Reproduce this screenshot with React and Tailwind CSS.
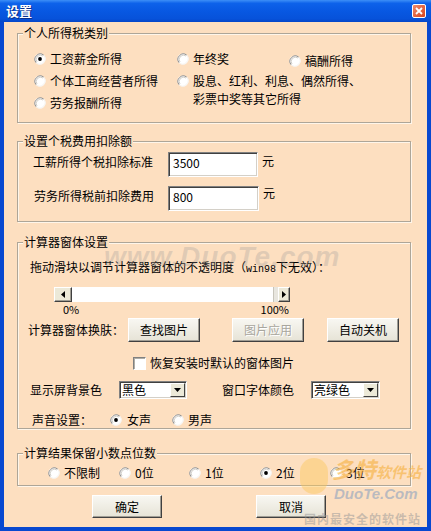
import React from "react";

function Radio({ checked }) {
  return (
    <svg width="12" height="12" viewBox="0 0 12 12" className="shrink-0">
      <circle cx="6" cy="6" r="5.6" fill="#ffffff" />
      <path d="M2.2 9.8 A5.4 5.4 0 0 1 9.8 2.2" stroke="#8c8c8c" strokeWidth="1" fill="none" />
      <path d="M3 9 A4.3 4.3 0 0 1 9 3" stroke="#d2d0ca" strokeWidth="1" fill="none" />
      <path d="M9.8 2.2 A5.4 5.4 0 0 1 2.2 9.8" stroke="#f4f2ee" strokeWidth="1" fill="none" />
      {checked && <circle cx="6" cy="6" r="1.9" fill="#000000" />}
    </svg>
  );
}

function RadioItem({ checked, children, className }) {
  return (
    <div className={"flex items-center gap-[4px] whitespace-nowrap " + (className || "")}>
      <Radio checked={checked} />
      <span>{children}</span>
    </div>
  );
}

function Group({ label, className, children }) {
  return (
    <div className={"relative border border-[#aea698] shadow-[inset_1px_1px_0_#fff6ea,1px_1px_0_#fff6ea] " + className}>
      <span className="absolute left-[5px] top-[-8px] px-[1px] bg-[#fddfc0] leading-[14px] whitespace-nowrap">
        {label}
      </span>
      {children}
    </div>
  );
}

function Button({ children, className, disabled }) {
  return (
    <div
      className={
        "flex items-center justify-center bg-[linear-gradient(to_bottom,#f8f7f2,#e6e3d6)] border border-t-[#ffffff] border-l-[#ffffff] border-b-[#404040] border-r-[#404040] shadow-[inset_-1px_-1px_0_#a09d94] " +
        (disabled ? "text-[#a8a69e] [text-shadow:1px_1px_0_#ffffff] " : "text-black ") +
        className
      }
    >
      {children}
    </div>
  );
}

function Input({ value, className }) {
  return (
    <div
      className={
        "bg-white border border-t-[#808080] border-l-[#808080] border-b-[#ffffff] border-r-[#ffffff] shadow-[inset_1px_1px_0_#404040,inset_-1px_-1px_0_#d4d0c8] pl-[4px] pt-[3px] leading-[14px] " +
        className
      }
    >
      {value}
    </div>
  );
}

function Select({ value, className }) {
  return (
    <div
      className={
        "bg-white border border-t-[#808080] border-l-[#808080] border-b-[#ffffff] border-r-[#ffffff] shadow-[inset_1px_1px_0_#404040,inset_-1px_-1px_0_#d4d0c8] flex items-stretch " +
        className
      }
    >
      <span className="flex-1 pl-[2px] pt-[1px] leading-[14px]">{value}</span>
      <div className="w-[15px] my-[1px] mr-[1px] bg-[#ece9d8] border border-t-[#ffffff] border-l-[#ffffff] border-b-[#404040] border-r-[#404040] flex items-center justify-center">
        <svg width="7" height="4" viewBox="0 0 7 4">
          <path d="M0 0H7L3.5 4Z" fill="#000" />
        </svg>
      </div>
    </div>
  );
}

function ScrollBtn({ dir, className }) {
  return (
    <div
      className={
        "bg-[#ece9d8] border border-t-[#ffffff] border-l-[#ffffff] border-b-[#404040] border-r-[#404040] shadow-[inset_-1px_-1px_0_#a09d94] flex items-center justify-center " +
        className
      }
    >
      <svg width="4" height="7" viewBox="0 0 4 7">
        {dir === "left" ? <path d="M4 0V7L0 3.5Z" fill="#000" /> : <path d="M0 0V7L4 3.5Z" fill="#000" />}
      </svg>
    </div>
  );
}

export default function App() {
  return (
    <div className="w-[431px] h-[531px] bg-[#0848d0] flex flex-col overflow-hidden font-['Noto_Sans_CJK_SC',sans-serif] text-[12px] leading-[14px] text-black">
      {/* title bar */}
      <div className="h-[22px] shrink-0 flex items-center justify-between pl-[6px] pr-[5px] bg-[linear-gradient(to_bottom,#3d8ff7_0%,#0d62ea_15%,#0858e2_50%,#0752da_85%,#0546c8_100%)]">
        <span className="text-white font-bold text-[13px] [text-shadow:1px_1px_0_#0a2f8a]">设置</span>
        <div className="w-[14px] h-[14px] rounded-[2px] border border-white bg-[linear-gradient(135deg,#f08a6a,#d8451f)] flex items-center justify-center">
          <svg width="8" height="8" viewBox="0 0 8 8">
            <path d="M1 1L7 7M7 1L1 7" stroke="#fff" strokeWidth="1.8" />
          </svg>
        </div>
      </div>

      {/* body */}
      <div className="relative flex-1 mx-[4px] mb-[4px] bg-[#fddfc0] pl-[13px] pr-[16px] pt-[11px]">
        {/* group 1 */}
        <Group label="个人所得税类别" className="h-[90px]">
          <div className="flex pl-[16px] pt-[14px]">
            <div className="w-[143px] flex flex-col">
              <RadioItem checked className="h-[22px]">工资薪金所得</RadioItem>
              <RadioItem className="h-[22px]">个体工商经营者所得</RadioItem>
              <RadioItem className="h-[22px]">劳务报酬所得</RadioItem>
            </div>
            <div className="w-[112px] flex flex-col">
              <RadioItem className="h-[22px]">年终奖</RadioItem>
              <div className="flex items-start gap-[4px] pt-[2px] whitespace-nowrap">
                <div className="mt-[3px]">
                  <Radio />
                </div>
                <span className="leading-[18px]">
                  股息、红利、利息、偶然所得、
                  <br />
                  彩票中奖等其它所得
                </span>
              </div>
            </div>
            <div className="flex flex-col pt-[2px]">
              <RadioItem className="h-[22px]">稿酬所得</RadioItem>
            </div>
          </div>
        </Group>

        {/* group 2 */}
        <Group label="设置个税费用扣除额" className="h-[81px] mt-[18px]">
          <div className="pl-[15px] pt-[10px] flex flex-col gap-[9px]">
            <div className="flex items-start">
              <span className="w-[135px] mt-[3px]">工薪所得个税扣除标准</span>
              <Input value="3500" className="w-[90px] h-[25px]" />
              <span className="ml-[4px] mt-[2px]">元</span>
            </div>
            <div className="flex items-start">
              <span className="w-[135px] mt-[3px] pl-[1px]">劳务所得税前扣除费用</span>
              <Input value="800" className="w-[91px] h-[25px]" />
              <span className="ml-[4px] mt-[0px]">元</span>
            </div>
          </div>
        </Group>

        {/* group 3 */}
        <Group label="计算器窗体设置" className="h-[187px] mt-[20px]">
          <div className="pl-[10px] pt-[17px] flex flex-col">
            <div className="ml-[2px] whitespace-nowrap">
              拖动滑块以调节计算器窗体的不透明度（
              <span className="font-['Liberation_Mono',monospace] text-[10px]">win98</span>
              下无效）：
            </div>
            <div className="ml-[26px] mt-[10px] w-[236px] h-[15px] flex bg-white">
              <ScrollBtn dir="left" className="w-[18px]" />
              <div className="flex-1 bg-white" />
              <div className="w-[5px] bg-[#e8e6df] border-l border-[#c8c5bb]" />
              <ScrollBtn dir="right" className="w-[12px]" />
            </div>
            <div className="ml-[26px] w-[236px] flex justify-between pl-[9px] pr-[1px] text-[11px] leading-[14px]">
              <span>0%</span>
              <span>100%</span>
            </div>
            <div className="flex items-center mt-[2px]">
              <span className="w-[100px] whitespace-nowrap">计算器窗体换肤：</span>
              <Button className="w-[72px] h-[24px]">查找图片</Button>
              <Button disabled className="w-[72px] h-[24px] ml-[32px]">图片应用</Button>
              <Button className="w-[72px] h-[24px] ml-[23px]">自动关机</Button>
            </div>
            <div className="flex items-center mt-[14px] ml-[105px]">
              <div className="w-[13px] h-[13px] bg-white border border-t-[#808080] border-l-[#808080] border-b-[#ffffff] border-r-[#ffffff] shadow-[inset_1px_1px_0_#b0aea6]" />
              <span className="ml-[4px]">恢复安装时默认的窗体图片</span>
            </div>
            <div className="flex items-center mt-[11px]">
              <span className="ml-[2px] w-[89px]">显示屏背景色</span>
              <Select value="黑色" className="w-[68px] h-[18px]" />
              <span className="ml-[35px] w-[89px]">窗口字体颜色</span>
              <Select value="亮绿色" className="w-[69px] h-[18px]" />
            </div>
            <div className="flex items-center mt-[13px] h-[16px]">
              <span className="ml-[4px] w-[78px]">声音设置：</span>
              <div className="flex items-center gap-[5px]">
                <Radio checked />
                <span>女声</span>
              </div>
              <div className="flex items-center gap-[4px] ml-[21px]">
                <Radio />
                <span>男声</span>
              </div>
            </div>
          </div>
        </Group>

        {/* group 4 */}
        <Group label="计算结果保留小数点位数" className="h-[33px] mt-[24px]">
          <div className="flex pl-[30px] pt-[12px]">
            <RadioItem className="w-[71px]">不限制</RadioItem>
            <RadioItem className="w-[70px]">0位</RadioItem>
            <RadioItem className="w-[71px]">1位</RadioItem>
            <RadioItem checked className="w-[70px]">2位</RadioItem>
            <RadioItem className="w-[71px]">3位</RadioItem>
          </div>
        </Group>

        {/* buttons */}
        <div className="flex mt-[9px]">
          <Button className="w-[70px] h-[23px] ml-[75px]">确定</Button>
          <Button className="w-[70px] h-[23px] ml-[94px]">取消</Button>
        </div>

        {/* watermarks */}
        <div className="pointer-events-none absolute left-[100px] top-[228px] text-[28px] font-bold italic font-['Liberation_Sans',sans-serif] text-[rgba(150,150,150,0.28)] tracking-[1px]">
          www.DuoTe.com
        </div>
        <div className="pointer-events-none absolute left-[292px] top-[430px] w-[130px] h-[72px]">
          <div className="absolute left-[4px] top-[6px] w-[28px] h-[36px] rounded-full bg-[rgba(250,200,90,0.45)]" />
          <div className="absolute left-[36px] top-[4px] text-[22px] font-bold italic text-[rgba(245,175,60,0.6)] leading-[24px] whitespace-nowrap">
            多特<span className="text-[15px]">软件站</span>
          </div>
          <div className="absolute left-[38px] top-[34px] text-[15px] font-bold italic font-['Liberation_Sans',sans-serif] text-[rgba(120,150,190,0.5)] leading-[16px]">
            DuoTe.Com
          </div>
          <div className="absolute left-[8px] top-[60px] text-[12px] font-bold text-[rgba(150,150,150,0.5)] leading-[14px] whitespace-nowrap tracking-[1px]">
            国内最安全的软件站
          </div>
        </div>
      </div>
    </div>
  );
}
